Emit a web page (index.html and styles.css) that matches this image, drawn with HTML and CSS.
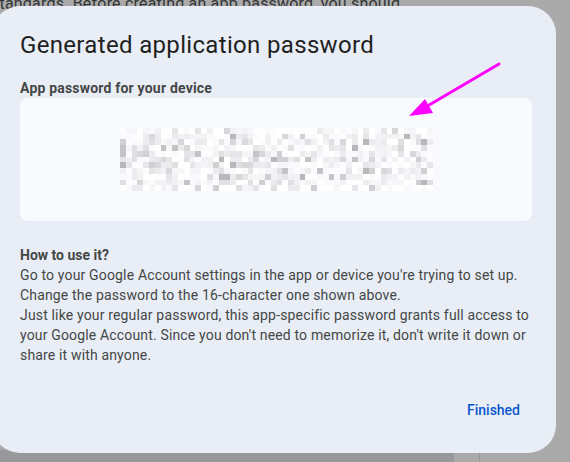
FILE: index.html
```html
<!DOCTYPE html>
<html lang="en">
<head>
<meta charset="utf-8">
<title>Generated application password</title>
<link rel="stylesheet" href="styles.css">
</head>
<body>
<div class="page">
  <p class="behind-text">standards. Before creating an app password, you should</p>
  <div class="page-fill"></div>
  <div class="bottom-strip">
    <div class="strip-dark"></div>
    <div class="strip-light"><div class="strip-line"></div></div>
  </div>
</div>

<div class="dialog" role="dialog">
  <h1 class="dialog-title">Generated application password</h1>
  <div class="label">App password for your device</div>
  <div class="password-box">
    <canvas class="mosaic" id="mosaic" width="313" height="63"></canvas>
  </div>
  <div class="howto">
    <div class="howto-title">How to use it?</div>
    <div class="howto-body">Go to your Google Account settings in the app or device you're trying to set up. Change the password to the 16-character one shown above.<br>Just like your regular password, this app-specific password grants full access to your Google Account. Since you don't need to memorize it, don't write it down or share it with anyone.</div>
  </div>
  <div class="actions">
    <button class="btn-text">Finished</button>
  </div>
</div>

<svg class="arrow" width="570" height="462" viewBox="0 0 570 462">
  <line x1="499" y1="64" x2="424" y2="108" stroke="#ff00ff" stroke-width="3" stroke-linecap="round"/>
  <polygon points="409,116 425,99 433,113" fill="#ff00ff"/>
</svg>

<script src="script.js"></script>
</body>
</html>
```

FILE: styles.css
```css
* { box-sizing: border-box; }
html, body { margin: 0; padding: 0; }
body {
  width: 570px;
  height: 462px;
  overflow: hidden;
  background: #aaaaaa;
  font-family: Roboto, "Liberation Sans", sans-serif;
  position: relative;
}
.page {
  height: 462px;
  display: flex;
  flex-direction: column;
}
.behind-text {
  margin: -8px 0 0 -9px;
  font-size: 16px;
  line-height: 24px;
  letter-spacing: 0.2px;
  color: #333436;
  white-space: nowrap;
}
.page-fill { flex: 1; }
.bottom-strip {
  height: 12px;
  display: flex;
}
.strip-dark { width: 454px; background: #97989a; }
.strip-light {
  flex: 1;
  background: #a9a9a9;
  padding-left: 25px;
}
.strip-line { width: 1px; height: 100%; background: #979797; }

.dialog {
  position: absolute;
  left: -8px;
  top: 6px;
  width: 564px;
  height: 447px;
  background: #e9eef6;
  border-radius: 28px;
  padding: 23px 24px 23px 28px;
  display: flex;
  flex-direction: column;
}
.dialog-title {
  margin: 0;
  font-size: 24px;
  line-height: 32px;
  font-weight: 400;
  letter-spacing: 0.33px;
  color: #1f1f1f;
}
.label {
  margin-top: 17px;
  font-size: 14px;
  line-height: 20px;
  font-weight: 700;
  letter-spacing: 0.2px;
  color: #444746;
}
.password-box {
  height: 123px;
  background: #f8fafd;
  border-radius: 8px;
  display: flex;
  align-items: center;
  justify-content: center;
}
.mosaic {
  display: block;
  width: 313px;
  height: 63px;
  margin-left: 1px;
  margin-top: -1px;
}
.howto {
  margin-top: 24px;
  font-size: 14px;
  line-height: 20px;
  letter-spacing: 0.16px;
  color: #444746;
}
.howto-title { font-weight: 700; letter-spacing: 0; }
.actions {
  margin-top: 25px;
  display: flex;
  justify-content: flex-end;
}
.btn-text {
  height: 40px;
  padding: 0 12px;
  border: none;
  background: transparent;
  color: #0b57d0;
  font-family: inherit;
  font-size: 14px;
  font-weight: 500;
  border-radius: 20px;
}
.arrow {
  position: absolute;
  left: 0;
  top: 0;
  pointer-events: none;
}
```

FILE: script.js
```js
(function () {
  var c = document.getElementById('mosaic');
  var ctx = c.getContext('2d');
  var cols = 54, rows = 11;
  var seed = 12345;
  function rnd() {
    seed = (seed * 1103515245 + 12345) & 0x7fffffff;
    return seed / 0x7fffffff;
  }
  var shades = [255, 253, 250, 246, 242, 236, 230, 224, 216, 208, 196, 184];
  for (var r = 0; r < rows; r++) {
    for (var k = 0; k < cols; k++) {
      var x0 = Math.round(k * c.width / cols);
      var x1 = Math.round((k + 1) * c.width / cols);
      var y0 = Math.round(r * c.height / rows);
      var y1 = Math.round((r + 1) * c.height / rows);
      var t = rnd();
      var idx;
      if (t < 0.42) idx = Math.floor(rnd() * 3);
      else if (t < 0.74) idx = 3 + Math.floor(rnd() * 3);
      else if (t < 0.92) idx = 6 + Math.floor(rnd() * 3);
      else idx = 9 + Math.floor(rnd() * 3);
      if (r === 0 || r === rows - 1) idx = Math.max(0, idx - 2);
      var v = shades[idx];
      ctx.fillStyle = 'rgb(' + v + ',' + v + ',' + (v === 255 ? 255 : Math.min(255, v + 3)) + ')';
      ctx.fillRect(x0, y0, x1 - x0, y1 - y0);
    }
  }
})();
```
